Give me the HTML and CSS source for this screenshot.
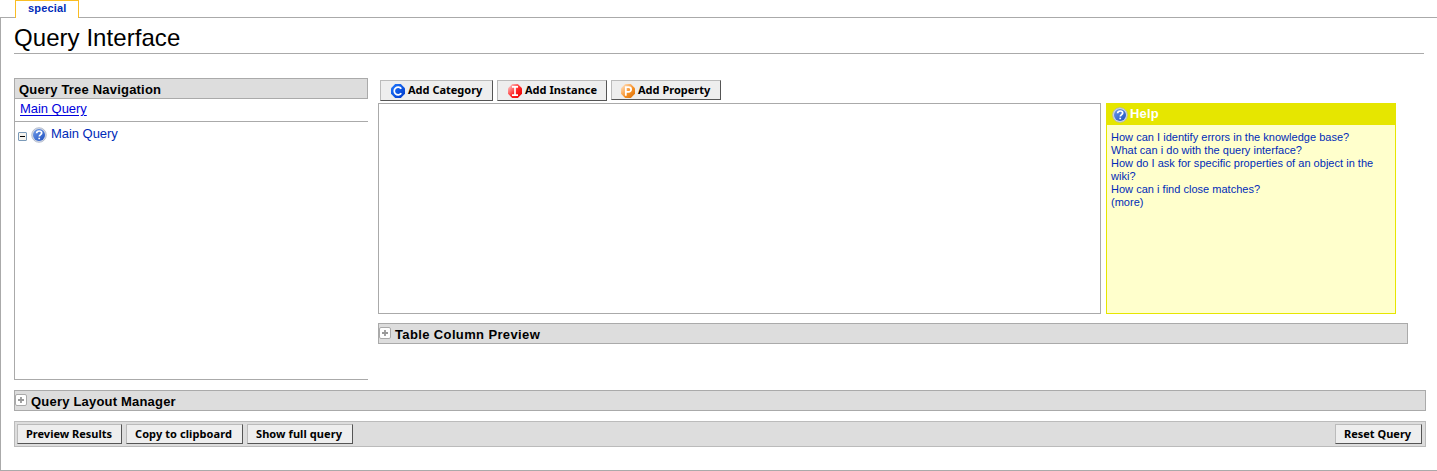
FILE: index.html
```html
<!DOCTYPE html>
<html lang="en">
<head>
<meta charset="utf-8">
<title>Query Interface</title>
<link rel="stylesheet" href="styles.css">
</head>
<body>
<svg class="defs" width="0" height="0" aria-hidden="true">
  <defs>
    <linearGradient id="gHelp" x1="0" y1="0" x2="1" y2="1"><stop offset="0" stop-color="#6f9be8"/><stop offset="1" stop-color="#1d4fc0"/></linearGradient>
    <linearGradient id="gBlue" x1="0" y1="0" x2="1" y2="1"><stop offset="0" stop-color="#1f78ff"/><stop offset="1" stop-color="#0038c8"/></linearGradient>
    <linearGradient id="gRed" x1="0" y1="0" x2="1" y2="1"><stop offset=".1" stop-color="#ffc0c0"/><stop offset=".55" stop-color="#f22"/><stop offset="1" stop-color="#e80000"/></linearGradient>
    <linearGradient id="gOrange" x1="0" y1="0" x2="1" y2="1"><stop offset=".1" stop-color="#ffdcb8"/><stop offset=".55" stop-color="#f7922a"/><stop offset="1" stop-color="#d86c00"/></linearGradient>
    <symbol id="help" viewBox="0 0 16 16">
      <circle cx="8" cy="8" r="7.3" fill="#d5dbe6" stroke="#a9b3c6" stroke-width=".8"/>
      <circle cx="8" cy="8" r="6" fill="url(#gHelp)"/>
      <path d="M5.600 6.300C5.700 4.700 6.800 4 8.200 4c1.500 0 2.500.8 2.500 2C10.700 7.500 8.300 7.700 8.300 9.500M8.200 10.700v1.500" fill="none" stroke="#fff" stroke-width="1.700"/>
    </symbol>
    <symbol id="plus" viewBox="0 0 12 12">
      <rect x=".5" y=".5" width="11" height="11" rx="1.500" fill="#fff" stroke="#aaa"/>
      <path d="M3 6h6M6 3v6" stroke="#999" stroke-width="1.800"/>
    </symbol>
  </defs>
</svg>
<nav class="tabs"><a class="tab">special</a></nav>
<main class="content">
  <h1 class="title">Query Interface</h1>
  <div class="workspace">
    <section class="tree">
      <h2 class="bar tree-title"><span class="t-tree">Query Tree Navigation</span></h2>
      <div class="crumbs"><a class="crumb">Main Query</a></div>
      <div class="node">
        <svg class="minus" width="9" height="9" viewBox="0 0 9 9"><rect x=".5" y=".5" width="8" height="8" rx=".5" fill="#f5f3ee" stroke="#7b9ab8"/><path d="M2 4.500h5" stroke="#000"/></svg>
        <svg class="node-icon" width="16" height="16"><use href="#help"/></svg>
        <a class="node-label">Main Query</a>
      </div>
    </section>
    <section class="editor">
      <div class="actions">
        <button class="btn add cat"><svg width="14" height="14" viewBox="0 0 14 14"><path d="M4.200 0h5.600L14 4.200v5.600L9.800 14H4.200L0 9.800V4.200z" fill="url(#gBlue)"/><path d="M10.300 4.700A3.900 3.900 0 1 0 10.300 9.300" fill="none" stroke="#fff" stroke-width="1.700"/></svg><span>Add Category</span></button>
        <button class="btn add inst"><svg width="14" height="14" viewBox="0 0 14 14"><path d="M4.200 0h5.600L14 4.200v5.600L9.800 14H4.200L0 9.800V4.200z" fill="url(#gRed)"/><path d="M4 2.800h6M4 11.200h6M7 3v8" stroke="#fff" stroke-width="1.700"/></svg><span>Add Instance</span></button>
        <button class="btn add prop"><svg width="14" height="14" viewBox="0 0 14 14"><path d="M4.200 0h5.600L14 4.200v5.600L9.800 14H4.200L0 9.800V4.200z" fill="url(#gOrange)"/><path d="M4.800 11.800V3.100h2.900a2.400 2.400 0 0 1 0 4.800H4.800" fill="none" stroke="#fff" stroke-width="1.800"/></svg><span>Add Property</span></button>
      </div>
      <div class="panels">
        <div class="canvas"></div>
        <aside class="help">
          <h2 class="help-title"><svg width="16" height="16"><use href="#help"/></svg><span>Help</span></h2>
          <ul class="help-list">
            <li>How can I identify errors in the knowledge base?</li>
            <li>What can i do with the query interface?</li>
            <li>How do I ask for specific properties of an object in the<br>wiki?</li>
            <li>How can i find close matches?</li>
            <li>(more)</li>
          </ul>
        </aside>
      </div>
      <h2 class="bar preview"><svg width="12" height="12"><use href="#plus"/></svg><span class="t-preview">Table Column Preview</span></h2>
    </section>
  </div>
  <h2 class="bar layout"><svg width="12" height="12"><use href="#plus"/></svg><span class="t-layout">Query Layout Manager</span></h2>
  <div class="footer">
    <button class="btn b-results"><span>Preview Results</span></button>
    <button class="btn b-copy"><span>Copy to clipboard</span></button>
    <button class="btn b-show"><span>Show full query</span></button>
    <button class="btn b-reset"><span>Reset Query</span></button>
  </div>
</main>
</body>
</html>
```
FILE: styles.css
```css
* { box-sizing: border-box; }
body { margin: 0; height: 471px; overflow: hidden; background: #fff; font-family: "Liberation Sans", Arial, sans-serif; color: #000; }
h1, h2, ul { margin: 0; padding: 0; font-weight: normal; }
ul { list-style: none; }
svg { display: block; flex: none; }
.defs { position: absolute; }
span, a, li { white-space: nowrap; }

.tabs { height: 17px; padding-left: 15px; }
.tab { position: relative; z-index: 1; display: block; width: 64px; height: 18px; background: #fff; border: 1px solid #fabd23; border-bottom: 0; color: #002bb8; font-size: 11px; font-weight: bold; line-height: 14px; padding-left: 12px; letter-spacing: .15px; }
.content { height: 454px; border: 1px solid #aaa; border-right: 0; padding-left: 13px; }
.title { width: 1410px; height: 36px; border-bottom: 1px solid #aaa; font-size: 24px; line-height: 39px; letter-spacing: .06px; }
.workspace { display: flex; gap: 10px; height: 302px; margin-top: 24px; }

.bar { display: flex; height: 21px; background: #ddd; border: 1px solid #aaa; font-size: 13px; font-weight: bold; line-height: 21px; }
.bar svg { margin-top: 3px; }
.bar svg + span { margin-left: 4px; }
.tree { width: 354px; border-left: 1px solid #aaa; border-bottom: 1px solid #aaa; }
.tree-title { margin-left: -1px; padding-left: 4px; }
.crumbs { height: 23px; padding-left: 5px; border-bottom: 1px solid #aaa; font-size: 13px; line-height: 19px; color: #00d; }
.crumb { text-decoration: underline; text-underline-offset: 2px; }
.node { display: flex; padding-left: 3px; color: #002bb8; font-size: 13px; line-height: 23px; }
.minus { margin-top: 10px; }
.node-icon { margin: 5px 4px 0; }
.crumb, .node-label { letter-spacing: -.04px; }

.editor { width: 1030px; }
.actions { display: flex; gap: 4px; height: 25px; padding: 2px 0 0 2px; }
.btn { display: flex; height: 20px; padding: 0 0 0 8px; background: #eee; border: 1px solid; border-color: #bbb #555 #555 #bbb; border-radius: 0; color: #000; font: bold 11px/18px "Noto Sans", sans-serif; }
.add { height: 21px; padding-left: 10px; }
.add svg { margin: 3px 3px 0 0; }
.cat { width: 113px; }
.inst, .prop { width: 110px; }
.prop { height: 20px; padding-left: 9px; }
.panels { display: flex; gap: 5px; height: 211px; }
.canvas { width: 723px; border: 1px solid #aaa; }
.help { width: 290px; background: #ffc; border: 1px solid #e6e600; }
.help-title { display: flex; height: 21px; background: #e6e600; color: #fff; padding: 3px 0 0 5px; font-size: 13px; font-weight: bold; line-height: 14px; }
.help-title span { margin-left: 2px; letter-spacing: .2px; }
.help-list { padding: 6px 0 0 4px; color: #002bb8; font-size: 11px; line-height: 13px; letter-spacing: .02px; }
.preview { margin-top: 9px; }
.layout { width: 1412px; margin-top: 10px; }
.t-preview { letter-spacing: .37px; }
.t-tree { letter-spacing: .2px; }
.t-layout { letter-spacing: .2px; }
.footer { display: flex; gap: 4px; width: 1412px; height: 26px; margin-top: 10px; padding: 2px 3px 0 2px; background: #ddd; border: 1px solid #bbb; }
.b-results { width: 105px; }
.b-copy { width: 117px; letter-spacing: .08px; }
.b-show { width: 106px; letter-spacing: .08px; }
.b-reset { width: 87px; margin-left: auto; }
```
